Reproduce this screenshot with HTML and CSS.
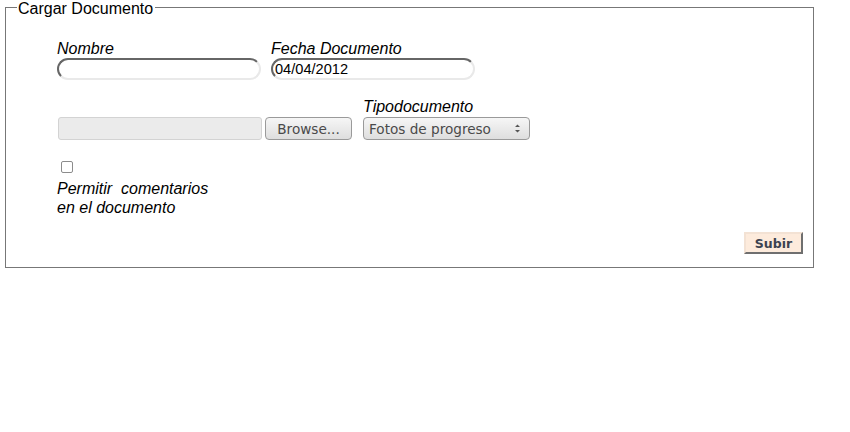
FILE: index.html
```html
<!DOCTYPE html>
<html>
<head>
<meta charset="utf-8">
<link rel="stylesheet" href="styles.css">
</head>
<body>
<form class="upload">
  <fieldset class="panel">
    <legend class="panel-title">Cargar Documento</legend>
    <div class="row row-names">
      <div class="field">
        <label class="lbl">Nombre</label>
        <input class="round-input" type="text">
      </div>
      <div class="field">
        <label class="lbl">Fecha Documento</label>
        <input class="round-input" type="text" value="04/04/2012">
      </div>
    </div>
    <div class="row row-file">
      <div class="file-picker">
        <span class="file-box"></span>
        <span class="btn-browse">Browse...</span>
      </div>
      <div class="field">
        <label class="lbl">Tipodocumento</label>
        <span class="select">
          <span class="select-text">Fotos de progreso</span>
          <svg class="select-arrows" width="7" height="11" viewBox="0 0 7 11"><path d="M1 4 L3.5 1.5 L6 4 Z M1 7 L3.5 9.5 L6 7 Z" fill="#555"/></svg>
        </span>
      </div>
    </div>
    <div class="row row-check">
      <span class="checkbox"></span>
      <label class="lbl check-lbl">Permitir&nbsp; comentarios en el documento</label>
    </div>
    <div class="actions">
      <span class="btn-submit">Subir</span>
    </div>
  </fieldset>
</form>
</body>
</html>
```
FILE: styles.css
```css
html, body {
  margin: 0;
  padding: 0;
  background: #fff;
}
body {
  font-family: "Liberation Sans", Arial, sans-serif;
  color: #000;
}
.upload {
  margin: 0;
}
.panel {
  box-sizing: border-box;
  width: 809px;
  margin: 0 0 0 5px;
  padding: 0 10px 13px 0;
  border: 1px solid #777;
  min-width: 0;
}
.panel-title {
  margin-left: 11px;
  padding: 3px 2px 0 1px;
  font-size: 16px;
  line-height: 11px;
  height: 11px;
}
.row {
  display: flex;
  padding-left: 51px;
}
.row-names {
  margin-top: 26px;
  gap: 10px;
}
.field {
  display: flex;
  flex-direction: column;
}
.lbl {
  font-style: italic;
  font-size: 16px;
  line-height: 18px;
}
.round-input {
  box-sizing: border-box;
  width: 204px;
  height: 22px;
  margin: 0;
  padding: 0 0 0 2px;
  border: 2px solid;
  border-color: #666 #e9e9e9 #e9e9e9 #666;
  border-radius: 11px;
  font-family: "Liberation Sans", Arial, sans-serif;
  font-size: 14.6px;
  color: #000;
  outline: none;
  background: #fff;
}
.row-file {
  margin-top: 18px;
  align-items: flex-end;
  gap: 11px;
  padding-left: 52px;
}
.file-picker {
  display: flex;
  gap: 3px;
}
.file-box {
  box-sizing: border-box;
  width: 204px;
  height: 23px;
  background: #ebebeb;
  border: 1px solid #d3d3d3;
  border-radius: 3px;
}
.btn-browse, .select {
  box-sizing: border-box;
  height: 23px;
  border: 1px solid #9a9a9a;
  border-radius: 4px;
  background: linear-gradient(#f6f6f6, #dedede);
  font-family: "DejaVu Sans", sans-serif;
  font-size: 13.6px;
  color: #4a4a4a;
  display: flex;
  align-items: center;
}
.btn-browse {
  width: 87px;
  justify-content: center;
}
.select {
  width: 167px;
  padding: 0 6px 0 5px;
  justify-content: space-between;
  margin-top: 1px;
}
.select-text {
  color: #4a4a4a;
}
.select-arrows {
  margin-right: 2px;
}
.row-check {
  flex-direction: column;
  align-items: flex-start;
  margin-top: 21px;
  padding-left: 51px;
}
.checkbox {
  box-sizing: border-box;
  width: 12px;
  height: 12px;
  margin-left: 4px;
  border: 1px solid #8c8c8c;
  border-radius: 2px;
  background: #fff;
}
.check-lbl {
  width: 160px;
  margin-top: 6px;
  line-height: 19px;
}
.actions {
  display: flex;
  justify-content: flex-end;
  margin-top: 15px;
}
.btn-submit {
  box-sizing: border-box;
  width: 59px;
  height: 22px;
  display: flex;
  align-items: center;
  justify-content: center;
  background: #fdebdc;
  border: 2px solid;
  border-color: #f3e2d4 #6f6f6f #6f6f6f #f3e2d4;
  font-family: "DejaVu Sans", sans-serif;
  font-weight: bold;
  font-size: 12.5px;
  color: #3c4350;
}
```
